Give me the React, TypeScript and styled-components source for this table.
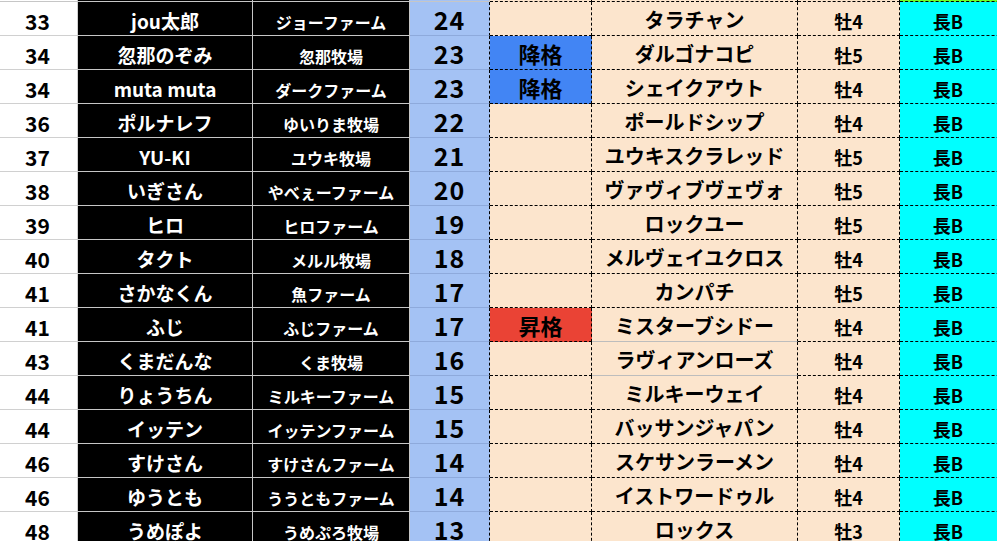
import { Fragment } from "react";
import styled, { createGlobalStyle, css } from "styled-components";

const GlobalStyle = createGlobalStyle`
  html, body {
    margin: 0;
    padding: 0;
    background: #fff;
    overflow: hidden;
  }
  body {
    font-family: "Noto Sans CJK JP", "Noto Sans", sans-serif;
  }
`;

type Status = "" | "up" | "down";

interface rowData {
  rank: number;
  name: string;
  farm: string;
  score: number;
  status: Status;
  horse: string;
  age: string;
  dist: string;
  solid?: boolean;
}

const rows: rowData[] = [
  { rank: 33, name: "jou太郎", farm: "ジョーファーム", score: 24, status: "", horse: "タラチャン", age: "牡4", dist: "長B" },
  { rank: 34, name: "忽那のぞみ", farm: "忽那牧場", score: 23, status: "down", horse: "ダルゴナコピ", age: "牡5", dist: "長B" },
  { rank: 34, name: "muta muta", farm: "ダークファーム", score: 23, status: "down", horse: "シェイクアウト", age: "牡4", dist: "長B" },
  { rank: 36, name: "ポルナレフ", farm: "ゆいりま牧場", score: 22, status: "", horse: "ポールドシップ", age: "牡4", dist: "長B" },
  { rank: 37, name: "YU-KI", farm: "ユウキ牧場", score: 21, status: "", horse: "ユウキスクラレッド", age: "牡5", dist: "長B" },
  { rank: 38, name: "いぎさん", farm: "やべぇーファーム", score: 20, status: "", horse: "ヴァヴィブヴェヴォ", age: "牡5", dist: "長B" },
  { rank: 39, name: "ヒロ", farm: "ヒロファーム", score: 19, status: "", horse: "ロックユー", age: "牡5", dist: "長B" },
  { rank: 40, name: "タクト", farm: "メルル牧場", score: 18, status: "", horse: "メルヴェイユクロス", age: "牡4", dist: "長B" },
  { rank: 41, name: "さかなくん", farm: "魚ファーム", score: 17, status: "", horse: "カンパチ", age: "牡5", dist: "長B" },
  { rank: 41, name: "ふじ", farm: "ふじファーム", score: 17, status: "up", horse: "ミスターブシドー", age: "牡4", dist: "長B", solid: true },
  { rank: 43, name: "くまだんな", farm: "くま牧場", score: 16, status: "", horse: "ラヴィアンローズ", age: "牡4", dist: "長B", solid: true },
  { rank: 44, name: "りょうちん", farm: "ミルキーファーム", score: 15, status: "", horse: "ミルキーウェイ", age: "牡4", dist: "長B" },
  { rank: 44, name: "イッテン", farm: "イッテンファーム", score: 15, status: "", horse: "バッサンジャパン", age: "牡4", dist: "長B" },
  { rank: 46, name: "すけさん", farm: "すけさんファーム", score: 14, status: "", horse: "スケサンラーメン", age: "牡4", dist: "長B" },
  { rank: 46, name: "ゆうとも", farm: "ううともファーム", score: 14, status: "", horse: "イストワードゥル", age: "牡4", dist: "長B" },
  { rank: 48, name: "うめぽよ", farm: "うめぷろ牧場", score: 13, status: "", horse: "ロックス", age: "牡3", dist: "長B" },
];

const Sheet = styled.div`
  display: grid;
  grid-template-columns: 78px 175px 157px 80px 102px 206px 102px 120px;
  width: 1020px;
`;

const Cell = styled.div`
  box-sizing: border-box;
  height: 34px;
  display: flex;
  align-items: center;
  justify-content: center;
  padding-top: 4px;
  font-weight: 700;
  white-space: nowrap;
  overflow: hidden;
  border-right: 1px solid #c6c6c6;
  border-bottom: 1px solid #c6c6c6;
  color: #000;
`;

const Stub = styled(Cell)<{ bg: string; dashed?: boolean }>`
  height: 2px;
  padding: 0;
  background: ${({ bg }) => bg};
  ${({ dashed }) =>
    dashed &&
    css`
      border-right: 1px dashed #000;
      border-bottom: 1px dashed #000;
    `}
`;

const Rank = styled(Cell)`
  background: #fff;
  font-size: 21px;
  padding-right: 2px;
  border-color: #d0d0d0;
`;

const Name = styled(Cell)`
  background: #000;
  color: #fff;
  font-size: 19px;
`;

const Farm = styled(Cell)`
  background: #000;
  color: #fff;
  font-size: 16px;
  padding-top: 7px;
`;

const Score = styled(Cell)`
  background: #a4c2f4;
  font-size: 25px;
  padding-top: 0;
  letter-spacing: 1px;
  border-bottom-color: #8eaadc;
  border-right: 1px dashed #000;
`;

const Peach = styled(Cell)`
  background: #fce5cd;
  border-right: 1px dashed #000;
  border-bottom: 1px dashed #000;
`;

const StatusCell = styled(Peach)<{ status: Status }>`
  font-size: 22px;
  padding-top: 1px;
  background: ${({ status }) =>
    status === "up" ? "#ea4335" : status === "down" ? "#4285f4" : "#fce5cd"};
`;

const Horse = styled(Peach)<{ solid?: boolean }>`
  font-size: 20px;
  padding-top: 2px;
  ${({ solid }) =>
    solid &&
    css`
      border-bottom: 1px solid #bdbdbd;
    `}
`;

const Age = styled(Peach)`
  font-size: 18px;
  padding-top: 5px;
`;

const Dist = styled(Peach)`
  background: #00ffff;
  font-size: 18px;
  padding-top: 5px;
  padding-right: 23px;
`;

const stubColors = ["#fff", "#000", "#000", "#a4c2f4", "#fce5cd", "#fce5cd", "#fce5cd", "#6aff2a"];

const statusLabel = (s: Status) => (s === "up" ? "昇格" : s === "down" ? "降格" : "");

const App = () => {
  return (
    <>
      <GlobalStyle />
      <Sheet>
        {stubColors.map((bg, i) => (
          <Stub key={i} bg={bg} dashed={i >= 4} />
        ))}
        {rows.map((r, i) => (
          <Fragment key={i}>
            <Rank>{r.rank}</Rank>
            <Name>{r.name}</Name>
            <Farm>{r.farm}</Farm>
            <Score>{r.score}</Score>
            <StatusCell status={r.status}>{statusLabel(r.status)}</StatusCell>
            <Horse solid={r.solid}>{r.horse}</Horse>
            <Age>{r.age}</Age>
            <Dist>{r.dist}</Dist>
          </Fragment>
        ))}
      </Sheet>
    </>
  );
};

export default App;
